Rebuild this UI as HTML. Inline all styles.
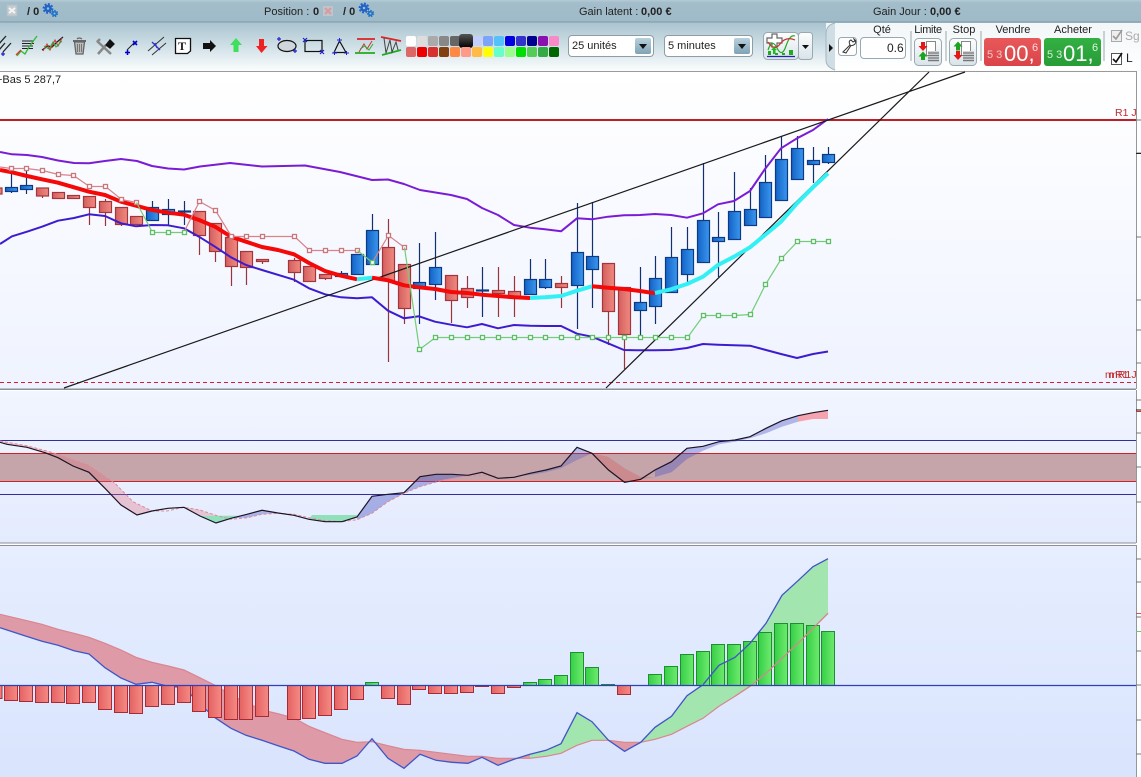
<!DOCTYPE html>
<html><head><meta charset="utf-8"><style>
html,body{margin:0;padding:0;width:1141px;height:777px;overflow:hidden;background:#fff;font-family:"Liberation Sans",sans-serif;font-size:11px;color:#222}
#a{position:absolute;left:0;top:0}
.t{position:absolute;white-space:nowrap;line-height:14px}
.c{transform:translateX(-50%)}
b{font-weight:bold}
.s{position:absolute;border:1px solid #8f9ea6;border-radius:4px;background:#fff;box-sizing:border-box;height:22px;top:35px}
.b{position:absolute;width:16px;height:16px;top:38px;border-radius:2px;background:linear-gradient(#b8d0dc,#7fa3b6)}
.b:after{content:"";position:absolute;left:4px;top:6px;border:4px solid transparent;border-top:5px solid #111;border-bottom:0}
.sw{position:absolute;width:10px;height:10px;border-radius:2px}
.o{position:absolute;box-sizing:border-box;border:1px solid #9aa8b0;border-radius:4px;background:#fff}
.pr{position:absolute;top:38px;height:28px;width:57px;border-radius:3px;color:#fff}
</style></head><body>
<svg id="a" width="1141" height="777" viewBox="0 0 1141 777">
<defs>
<linearGradient id="top" x1="0" y1="0" x2="0" y2="1"><stop offset="0" stop-color="#b4ccd7"/><stop offset=".12" stop-color="#a3bdca"/><stop offset="1" stop-color="#9fbac8"/></linearGradient>
<linearGradient id="tb" x1="0" y1="0" x2="0" y2="1"><stop offset="0" stop-color="#a9c3cf"/><stop offset=".5" stop-color="#d0e0e7"/><stop offset="1" stop-color="#fbfdfd"/></linearGradient>
<linearGradient id="bt" x1="0" y1="0" x2="0" y2="1"><stop offset="0" stop-color="#fdfefe"/><stop offset="1" stop-color="#d8e3e9"/></linearGradient>
<linearGradient id="m" x1="0" y1="0" x2="0" y2="1"><stop offset="0" stop-color="#fff"/><stop offset="1" stop-color="#eff3ff"/></linearGradient>
<linearGradient id="p2" x1="0" y1="0" x2="0" y2="1"><stop offset="0" stop-color="#f1f5ff"/><stop offset="1" stop-color="#e4ebfd"/></linearGradient>
<linearGradient id="p3" x1="0" y1="0" x2="0" y2="1"><stop offset="0" stop-color="#e6eeff"/><stop offset="1" stop-color="#d9e4fd"/></linearGradient>
<linearGradient id="bl"><stop offset="0" stop-color="#1362c6"/><stop offset="1" stop-color="#3b97ee"/></linearGradient>
<linearGradient id="rd"><stop offset="0" stop-color="#d45f5f"/><stop offset="1" stop-color="#f08a80"/></linearGradient>
<linearGradient id="hr"><stop offset="0" stop-color="#e46262"/><stop offset="1" stop-color="#f58a84"/></linearGradient>
<linearGradient id="hg"><stop offset="0" stop-color="#35cf45"/><stop offset="1" stop-color="#6fea6f"/></linearGradient>
</defs>
<!-- top bars -->
<rect x="0" y="0" width="1141" height="22" fill="url(#top)"/>
<rect x="0" y="22" width="1141" height="49" fill="url(#tb)"/>
<rect x="0" y="21.500" width="1141" height="1" fill="#7d9aa9"/>
<path d="M826 23H1141V70H838Q832 68 826 60Z" fill="#fff" fill-opacity=".85"/>
<path d="M835 23Q826 25 826 34V60Q826 67 835 70" fill="#cfdde4" stroke="#a5b6bf"/>
<rect x="0" y="71" width="1136" height="1" fill="#9a9a9a"/>
<!-- buttons -->
<rect x="763.500" y="32.500" width="35" height="27" rx="4" fill="url(#bt)" stroke="#9aa8b0"/>
<rect x="798.500" y="32.500" width="14" height="27" rx="3" fill="url(#bt)" stroke="#9aa8b0"/>
<rect x="838.500" y="37.500" width="18" height="18" rx="3" fill="#fff" stroke="#9aa8b0"/>
<rect x="914.500" y="38.500" width="27" height="27" rx="4" fill="url(#bt)" stroke="#9aa8b0"/>
<rect x="949.500" y="38.500" width="27" height="27" rx="4" fill="url(#bt)" stroke="#9aa8b0"/>
<!-- main chart -->
<rect x="0" y="72" width="1136" height="317" fill="url(#m)"/>
<rect x="1136" y="71" width="1" height="318" fill="#8f9aa0"/>
<path d="M1136 120H1141M1136 153H1141M1136 237H1141M1136 300H1141M1136 330H1141M1136 363H1141" stroke="#777" fill="none"/>
<path d="M1136 153.500H1141" stroke="#222"/>
<path d="M0 382.500H1136" stroke="#d02030" stroke-dasharray="4 3" fill="none"/>
<path d="M0 120H1136" stroke="#bf1e24" stroke-width="2" fill="none"/>
<rect x="0" y="388.500" width="1136" height="1.500" fill="#8a9296"/>
<!-- wicks -->
<path fill="none" stroke="#12306f" stroke-width="1.200" d="M11.500 171V193M26.500 171V194M152.500 201V220M168.500 199V225M184.500 201V225M341.500 271V276M372.500 214V264M419.500 243V324M435.500 232V300M482.500 267V317M530.500 259V294M545.500 259V289M577.500 203V329M592.500 202V308M640.500 267V340M655.500 256V324M671.500 227V292M687.500 227V282M703.500 163V262M718.500 212V277M734.500 172V239M750.500 188V225M765.500 155V217M781.500 136V200M797.500 136V179M813.500 147V183M828.500 147V164"/>
<path fill="none" stroke="#98343a" stroke-width="1.200" d="M42.500 196V198M58.500 198V199M73.500 198V199M89.500 207V225M105.500 199V226M121.500 224V226M199.500 235V255M215.500 251V262M231.500 266V286M246.500 267V285M262.500 261V264M294.500 258V282M309.500 281V282M325.500 278V280M388.500 219V362M404.500 308V324M451.500 300V323M467.500 276V308M498.500 267V317M514.500 276V317M561.500 276V308M608.500 311V345M624.500 334V369"/>
<!-- red bodies -->
<g fill="url(#rd)" stroke="#a2363c" stroke-width="1.200">
<rect x="-4" y="188" width="6" height="6"/><rect x="36.500" y="188" width="12" height="8"/><rect x="52.500" y="192.500" width="12" height="6"/><rect x="67.500" y="195.500" width="12" height="3"/><rect x="83.500" y="196.500" width="12" height="11"/><rect x="99.500" y="201.500" width="12" height="11"/><rect x="115.500" y="207.500" width="12" height="17"/><rect x="130.500" y="216.500" width="12" height="8"/><rect x="193.500" y="211.500" width="12" height="24"/><rect x="209.500" y="223.500" width="12" height="28"/><rect x="225.500" y="237.500" width="12" height="29"/><rect x="240.500" y="251.500" width="12" height="16"/><rect x="256.500" y="259.500" width="12" height="2"/><rect x="288.500" y="260.500" width="12" height="12"/><rect x="303.500" y="266.500" width="12" height="15"/><rect x="319.500" y="274.500" width="12" height="4"/><rect x="382.500" y="247.500" width="12" height="33"/><rect x="398.500" y="264.500" width="12" height="44"/><rect x="445.500" y="275.500" width="12" height="25"/><rect x="461.500" y="288.500" width="12" height="9"/><rect x="492.500" y="290.500" width="12" height="3"/><rect x="508.500" y="291.500" width="12" height="6"/><rect x="555.500" y="283.500" width="12" height="4"/><rect x="602.500" y="263.500" width="12" height="48"/><rect x="618.500" y="287.500" width="12" height="47"/>
</g>
<!-- blue bodies -->
<g fill="url(#bl)" stroke="#0d3a84" stroke-width="1.200">
<rect x="5.500" y="187.500" width="12" height="4"/><rect x="20.500" y="185.500" width="12" height="4"/><rect x="146.500" y="207.500" width="12" height="13"/><rect x="162.500" y="209.500" width="12" height="5"/><rect x="178.500" y="211" width="12" height="1"/><rect x="335.500" y="273.500" width="12" height="3"/><rect x="351.500" y="254.500" width="12" height="20"/><rect x="366.500" y="230.500" width="12" height="34"/><rect x="413.500" y="282.500" width="12" height="6"/><rect x="429.500" y="267.500" width="12" height="17"/><rect x="476.500" y="290" width="12" height="1"/><rect x="524.500" y="279.500" width="12" height="15"/><rect x="539.500" y="279.500" width="12" height="8"/><rect x="571.500" y="252.500" width="12" height="33"/><rect x="586.500" y="256.500" width="12" height="13"/><rect x="634.500" y="302.500" width="12" height="8"/><rect x="649.500" y="278.500" width="12" height="28"/><rect x="665.500" y="257.500" width="12" height="35"/><rect x="681.500" y="249.500" width="12" height="25"/><rect x="697.500" y="220.500" width="12" height="42"/><rect x="712.500" y="237.500" width="12" height="4"/><rect x="728.500" y="211.500" width="12" height="28"/><rect x="744.500" y="209.500" width="12" height="16"/><rect x="759.500" y="182.500" width="12" height="35"/><rect x="775.500" y="159.500" width="12" height="41"/><rect x="791.500" y="148.500" width="12" height="31"/><rect x="807.500" y="160.500" width="12" height="4"/><rect x="822.500" y="154.500" width="12" height="8"/>
</g>
<!-- bollinger -->
<polyline fill="none" stroke="#7a1cd6" stroke-width="2" stroke-linejoin="round" points="0,152 12,154.300 27,155 42,157 58,160.500 74,163 89,163.300 105,161 121,159 137,161 152,166 168,168.500 184,169.500 200,166.500 230,163 262,166.500 305,165.500 340,172 372,180 388,179.500 404,184 420,190 451,195 467,199 482,208 498,215 514,225 530,227.700 545,229.300 561,231.300 577,218.300 592,219.300 608,216.700 624,215.300 640,215 655,214 671,215 687,217.700 703,213.300 718,204.300 734,201 750,191 765,169 781,148.300 797,138.300 813,130 828,119"/>
<polyline fill="none" stroke="#3d1ccf" stroke-width="2" stroke-linejoin="round" points="0,244 12,236.300 27,231.700 42,226.700 58,220.700 74,218 89,214.300 105,216 121,223.300 136,226.300 152,225 168,225.300 184,228.300 199,236.700 215,246.700 231,257.300 246,265 262,270 294,279.700 309,288.300 325,294.300 341,297.300 357,298.300 372,297.300 388,310.700 404,318.300 419,316.300 435,321.700 451,324.700 467,327.300 482,324 498,328.300 514,325 530,325.700 545,326 561,326 577,333.700 592,336.700 608,343.300 624,350 640,350.300 655,350.300 671,350 687,348 703,344 718,344.700 734,345.300 750,345.700 766,350 781,354 797,358 813,354 828,351.500"/>
<!-- trend lines -->
<path d="M64 388L965 72M606 388L929 72" stroke="#1a1a1a" stroke-width="1.200" fill="none"/>
<!-- MA -->
<g fill="none" stroke-width="4" stroke-linejoin="round">
<polyline stroke="#f40808" points="0,170 12,172.300 27,176 42,179.300 58,182.700 74,187.300 89,191.700 105,195 121,201.700 136,205.700 152,210 168,212.700 184,214.700 199,220 215,226.700 231,236.700 246,241.700 262,247 278,250 294,254.300 309,263 325,271 341,275.700 357,279.300"/>
<polyline stroke="#33f0f5" points="357,279.300 372,277.700"/>
<polyline stroke="#f40808" points="372,277.700 388,280.300 404,285.300 419,287.300 435,289 451,292 467,293 482,294.700 498,296 514,297.300 530,298"/>
<polyline stroke="#33f0f5" points="530,298 545,297.300 561,296 577,290.700 592,286.300"/>
<polyline stroke="#f40808" points="592,286.300 608,287.700 624,289 640,291 655,293.300"/>
<polyline stroke="#33f0f5" points="655,293 671,289.300 687,284 703,276.700 718,265 734,256.700 750,247.300 765,235 781,221.700 797,203.300 813,187.300 828,173.300"/>
</g>
<!-- stops -->
<g fill="none" stroke="#d8848a" stroke-width="1.200">
<polyline points="0,167 11.500,168.500 26.500,168.500 42.500,170.500 58.500,174.500 73.500,175.500 89.500,186.500 105.500,186.500 121.500,199.500 136.500,202.500"/>
<polyline points="185,230 199.500,201.500 215.500,210.500 231.500,236.500 246.500,236.500 262.500,236.500 294.500,236.500 309.500,250.500 325.500,250.500 341.500,250.500 357.500,250.500"/>
<polyline points="372.500,262 388.500,235.500 404.500,247.500"/>
</g>
<g fill="#fff" stroke="#c8777c" stroke-width="1.300">
<rect x="9.500" y="166.500" width="4" height="4"/><rect x="24.500" y="166.500" width="4" height="4"/><rect x="40.500" y="168.500" width="4" height="4"/><rect x="56.500" y="172.500" width="4" height="4"/><rect x="71.500" y="173.500" width="4" height="4"/><rect x="87.500" y="184.500" width="4" height="4"/><rect x="103.500" y="184.500" width="4" height="4"/><rect x="119.500" y="197.500" width="4" height="4"/><rect x="134.500" y="200.500" width="4" height="4"/><rect x="197.500" y="199.500" width="4" height="4"/><rect x="213.500" y="208.500" width="4" height="4"/><rect x="229.500" y="234.500" width="4" height="4"/><rect x="244.500" y="234.500" width="4" height="4"/><rect x="260.500" y="234.500" width="4" height="4"/><rect x="292.500" y="234.500" width="4" height="4"/><rect x="307.500" y="248.500" width="4" height="4"/><rect x="323.500" y="248.500" width="4" height="4"/><rect x="339.500" y="248.500" width="4" height="4"/><rect x="355.500" y="248.500" width="4" height="4"/><rect x="386.500" y="233.500" width="4" height="4"/><rect x="402.500" y="245.500" width="4" height="4"/>
</g>
<g fill="none" stroke="#74cc78" stroke-width="1.200">
<polyline points="136.500,202.500 152.500,232.500 168.500,232.500 184.500,232.500"/>
<polyline points="357.500,250.500 372.500,262.500"/>
<polyline points="404.500,247.500 419.500,349.500 435.500,337.500 451.500,337.500 687.500,337.500 703.500,315.500 718.500,315.500 734.500,315.500 750.500,314.500 765.500,284.500 781.500,258.500 797.500,241.500 828.500,241.500"/>
</g>
<g fill="#fff" stroke="#5fbf66" stroke-width="1.300">
<rect x="150.500" y="230.500" width="4" height="4"/><rect x="166.500" y="230.500" width="4" height="4"/><rect x="182.500" y="230.500" width="4" height="4"/><rect x="370.500" y="260.500" width="4" height="4"/><rect x="417.500" y="347.500" width="4" height="4"/><rect x="433.500" y="335.500" width="4" height="4"/><rect x="449.500" y="335.500" width="4" height="4"/><rect x="465.500" y="335.500" width="4" height="4"/><rect x="480.500" y="335.500" width="4" height="4"/><rect x="496.500" y="335.500" width="4" height="4"/><rect x="512.500" y="335.500" width="4" height="4"/><rect x="528.500" y="335.500" width="4" height="4"/><rect x="543.500" y="335.500" width="4" height="4"/><rect x="559.500" y="335.500" width="4" height="4"/><rect x="575.500" y="335.500" width="4" height="4"/><rect x="590.500" y="335.500" width="4" height="4"/><rect x="606.500" y="335.500" width="4" height="4"/><rect x="622.500" y="335.500" width="4" height="4"/><rect x="638.500" y="335.500" width="4" height="4"/><rect x="653.500" y="335.500" width="4" height="4"/><rect x="669.500" y="335.500" width="4" height="4"/><rect x="685.500" y="335.500" width="4" height="4"/><rect x="701.500" y="313.500" width="4" height="4"/><rect x="716.500" y="313.500" width="4" height="4"/><rect x="732.500" y="313.500" width="4" height="4"/><rect x="748.500" y="312.500" width="4" height="4"/><rect x="763.500" y="282.500" width="4" height="4"/><rect x="779.500" y="256.500" width="4" height="4"/><rect x="795.500" y="239.500" width="4" height="4"/><rect x="811.500" y="239.500" width="4" height="4"/><rect x="826.500" y="239.500" width="4" height="4"/>
</g>
<!-- panel 2 -->
<rect x="0" y="391" width="1136" height="151.500" fill="url(#p2)"/>
<rect x="0" y="453.500" width="1136" height="28" fill="#c5a5aa"/>
<path d="M0 440.500H1136M0 494.500H1136" stroke="#2f2f9e" fill="none"/>
<path d="M0 453.500H1136M0 481.500H1136" stroke="#d01f26" fill="none"/>
<polygon fill="#e06a7a" fill-opacity=".32" points="0,441 28,446 53,452.700 88,465 115,483.300 133,501.700 152,511 137,515 121,505 105,488.300 89,472.300 73,466 58,457.700 45,452.700 27,447.300 7,444"/>
<polygon fill="#e06a7a" fill-opacity=".3" points="184,507.300 200,510 217,515.700 200,516"/>
<polygon fill="#8fe0bb" points="200,516 217,515.700 238,515.700 231,518.300 216,523"/>
<polygon fill="#8f9cdc" fill-opacity=".7" points="231,518.300 247,514.300 262,510.300 278,513 262,514.300 247,517.700"/>
<polygon fill="#8fe0bb" points="312,515 357,515 357,517 342,521.700 325,521.700 309,519.300"/>
<polygon fill="#4b55c4" fill-opacity=".42" points="357,517 372,496.300 388,494.300 404,492.700 420,476.700 436,474.300 452,474.300 468,475.300 443,480 420,486.700 404,493.300 388,501.700 372,513.300 357,519.700"/>
<polygon fill="#4b55c4" fill-opacity=".32" points="498,478 514,477.300 530,473.300 546,470 561,466 577,447.300 592,453.300 577,460 561,468.300 546,472.300 530,475"/>
<polygon fill="#d85a5a" fill-opacity=".35" points="592,453.300 608,456.700 624.600,468.300 640.700,477 655,477 640.700,479.300 624.600,482.300 608.500,470"/>
<polygon fill="#4b55c4" fill-opacity=".38" points="655,477 655,470 671.500,461.700 687,448.300 703,446.300 719,441.700 735,440 750,436.700 766,428.300 782,420.700 798,415.700 798,421.700 782,426.700 766,433.300 750,438.300 735,441.700 719,444.300 703,450.700 687,459 671.500,472.300"/>
<polygon fill="#f6a3b0" points="798,415.700 813,412.700 828,410.300 828,419 813,419 798,421.700"/>
<polyline fill="none" stroke="#e08a98" stroke-dasharray="3 2" points="0,441 28,446 53,452.700 88,465 115,483.300 133,501.700 152,511 167,511 184,507.300 200,510 217,515.700 231,519.300 247,517.700 262,514.300 278,513.300 294,514.300 309,517.700 325,520.700 342,521.700 357,519.700 372,513.300 388,501.700 404,493.300 420,486.700 443,480 468,475.700 498,475.700"/>
<polyline fill="none" stroke="#1c1426" stroke-width="1.200" points="0,442.300 7,444.300 27,447.300 45,452.700 58,457.700 73,466 89,472.300 105,488.300 121,505 137,515 152,511 168,508.300 184,507.300 200,516 216,523 231,518.300 247,514.300 262,510.300 278,513 294,515.300 309,519.300 325,521.700 342,521.700 357,517 372,496.300 388,494.300 404,492.700 420,476.700 436,474.300 452,474.300 468,475.300 482,472.300 498,478.300 514,477.300 530,473.300 546,470 561,466 577,447.300 592,453.300 608.500,470 624.600,482.300 640.700,479.300 655,470 671.500,461.700 687,448.300 703,446.300 719,441.700 735,440 750,436.700 766,428.300 782,420.700 798,415.700 813,412.700 828,410.300"/>
<rect x="1136" y="390" width="1" height="153" fill="#8f9aa0"/>
<path d="M1136 400H1141M1136 433H1141M1136 467H1141M1136 502H1141" stroke="#777" fill="none"/>
<path d="M1136 410H1141" stroke="#111"/><path d="M1136 411.500H1141" stroke="#c33"/>
<rect x="0" y="542.500" width="1136" height="1" fill="#8a9296"/>
<!-- panel 3 -->
<rect x="0" y="545" width="1136" height="232" fill="url(#p3)"/>
<rect x="0" y="545" width="1136" height="1" fill="#8a9296"/>
<rect x="1136" y="545" width="1" height="232" fill="#8f9aa0"/>
<path d="M1136 559H1141M1136 582H1141M1136 617H1141M1136 651H1141M1136 685H1141M1136 720H1141M1136 754H1141" stroke="#777" fill="none"/>
<path d="M1136 613.500H1141" stroke="#c55"/><path d="M1136 631.500H1141" stroke="#6c6"/>
<polygon fill="#df9aa7" points="0,614.300 27,620.700 42,624.300 58,629.300 74,633.300 89,637.300 105,643.300 121,650 136,657.300 152,662.300 168,666 184,670 199,677.300 215,685.300 231,695 246,702.300 262,710 278,713.700 294,718 309,726.300 325,732.700 342,739.300 357,742.300 372,741.700 388,745.700 404,749.300 420,750.300 436,752.300 452,754.300 468,756.300 482,756.300 498,758.300 514,758.300 530,758.300 530,754.300 514,759.300 498,765.300 482,757.300 468,763.300 452,762.300 436,760.300 420,754.300 404,768.300 388,758.300 372,738.700 357,756 342,763.300 325,763.300 309,759.300 294,751 278,745.700 262,740.300 246,735.300 231,728.300 215,717.700 199,703.300 184,687.300 168,686.300 152,682.300 136,684.300 121,678 105,667.700 89,654 74,650.700 58,645.300 42,641.300 17,633.300 0,627.700"/>
<polygon fill="#a2e5ae" points="530,758.300 546,756.300 561,753.300 577,745.300 592,740.300 608.500,740.300 592,721.700 577,712.700 561,743.700 546,750.300 530,754.300"/>
<polygon fill="#df9aa7" points="608.500,740.300 624.600,742.300 640.700,742.300 624.600,751.300"/>
<polygon fill="#a2e5ae" points="640.700,742.300 655,739.300 671.500,734.300 687,726.300 703,718.300 719,706.300 735,696.300 750,686.300 766,673.300 782,658.300 798,643.300 813,628.300 828,613.300 828,558.700 813,566.700 798,580.700 782,595.300 766,623.300 750,643.300 735,657.300 719,665.300 703,684.700 687,695.700 671.500,716.300 655,727.300"/>
<polyline fill="none" stroke="#d9868f" stroke-width="1.200" points="0,614.300 27,620.700 42,624.300 58,629.300 74,633.300 89,637.300 105,643.300 121,650 136,657.300 152,662.300 168,666 184,670 199,677.300 215,685.300 231,695 246,702.300 262,710 278,713.700 294,718 309,726.300 325,732.700 342,739.300 357,742.300 372,741.700 388,745.700 404,749.300 420,750.300 436,752.300 452,754.300 468,756.300 482,756.300 498,758.300 530,758.300 546,756.300 561,753.300 577,745.300 592,740.300 608.500,740.300 624.600,742.300 640.700,742.300 655,739.300 671.500,734.300 687,726.300 703,718.300 719,706.300 735,696.300 750,686.300 766,673.300 782,658.300 798,643.300 813,628.300 828,613.300"/>
<polyline fill="none" stroke="#3f55c8" stroke-width="1.300" points="0,627.700 17,633.300 42,641.300 58,645.300 74,650.700 89,654 105,667.700 121,678 136,684.300 152,682.300 168,686.300 184,687.300 199,703.300 215,717.700 231,728.300 246,735.300 262,740.300 278,745.700 294,751 309,759.300 325,763.300 342,763.300 357,756 372,738.700 388,758.300 404,768.300 420,754.300 436,760.300 452,762.300 468,763.300 482,757.300 498,765.300 514,759.300 530,754.300 546,750.300 561,743.700 577,712.700 592,721.700 608.500,740.300 624.600,751.300 640.700,742.300 655,727.300 671.500,716.300 687,695.700 703,684.700"/>
<g fill="url(#hr)" stroke="#a82a36" stroke-width="1">
<rect x="-2" y="685.500" width="4" height="13"/><rect x="4.500" y="685.500" width="13" height="15"/><rect x="19.500" y="685.500" width="13" height="16"/><rect x="35.500" y="685.500" width="13" height="17"/><rect x="51.500" y="685.500" width="13" height="17"/><rect x="66.500" y="685.500" width="13" height="18"/><rect x="82.500" y="685.500" width="13" height="17"/><rect x="98.500" y="685.500" width="13" height="24"/><rect x="114.500" y="685.500" width="13" height="27"/><rect x="129.500" y="685.500" width="13" height="28"/><rect x="145.500" y="685.500" width="13" height="21"/><rect x="161.500" y="685.500" width="13" height="19"/><rect x="177.500" y="685.500" width="13" height="17"/><rect x="192.500" y="685.500" width="13" height="26"/><rect x="208.500" y="685.500" width="13" height="32"/><rect x="224.500" y="685.500" width="13" height="34"/><rect x="239.500" y="685.500" width="13" height="34"/><rect x="255.500" y="685.500" width="13" height="31"/><rect x="287.500" y="685.500" width="13" height="34"/><rect x="302.500" y="685.500" width="13" height="33"/><rect x="318.500" y="685.500" width="13" height="30"/><rect x="334.500" y="685.500" width="13" height="24"/><rect x="350.500" y="685.500" width="13" height="14"/><rect x="381.500" y="685.500" width="13" height="13"/><rect x="397.500" y="685.500" width="13" height="19"/><rect x="412.500" y="685.500" width="13" height="4"/><rect x="428.500" y="685.500" width="13" height="8"/><rect x="444.500" y="685.500" width="13" height="8"/><rect x="460.500" y="685.500" width="13" height="7"/><rect x="475.500" y="685.500" width="13" height="1"/><rect x="491.500" y="685.500" width="13" height="8"/><rect x="507.500" y="685.500" width="13" height="2"/><rect x="617.500" y="685.500" width="13" height="9"/>
</g>
<g fill="url(#hg)" stroke="#1e8f30" stroke-width="1">
<rect x="365.500" y="682.500" width="13" height="3"/><rect x="523.500" y="682.500" width="13" height="3"/><rect x="538.500" y="679.500" width="13" height="6"/><rect x="554.500" y="675.500" width="13" height="10"/><rect x="570.500" y="652.500" width="13" height="33"/><rect x="585.500" y="667.500" width="13" height="18"/><rect x="601.500" y="684.500" width="13" height="1"/><rect x="648.500" y="674.500" width="13" height="11"/><rect x="664.500" y="666.500" width="13" height="19"/><rect x="680.500" y="654.500" width="13" height="31"/><rect x="696.500" y="651.500" width="13" height="34"/><rect x="711.500" y="644.500" width="13" height="41"/><rect x="727.500" y="644.500" width="13" height="41"/><rect x="743.500" y="641.500" width="13" height="44"/><rect x="758.500" y="632.500" width="13" height="53"/><rect x="774.500" y="623.500" width="13" height="62"/><rect x="790.500" y="623.500" width="13" height="62"/><rect x="806.500" y="625.500" width="13" height="60"/><rect x="821.500" y="631.500" width="13" height="54"/>
</g>
<polyline fill="none" stroke="#3f55c8" stroke-width="1.300" points="703,684.700 719,665.300 735,657.300 750,643.300 766,623.300 782,595.300 798,580.700 813,566.700 828,558.700"/>
<polyline fill="none" stroke="#d9868f" stroke-width="1.200" points="735,696.300 750,686.300 766,673.300 782,658.300 798,643.300 813,628.300 828,613.300"/>
<path d="M0 685.500H1136" stroke="#2e3fb8" stroke-width="1.300" fill="none"/>
<!-- toolbar icons -->
<g fill="none" stroke-width="1.300">
<path d="M-2 45L6 36M3 52L11 43M-1 50L5 43" stroke="#222"/><path d="M1 54H5M3 52V56" stroke="#22c"/>
<path d="M22 41H34M22 43.500H34M22 46H33M22 48.500H33" stroke="#222" stroke-width="1"/>
<path d="M17 56L21 51L25 54L29 47L37 36" stroke="#3b3"/><path d="M16 55L21 50" stroke="#d33"/>
<path d="M42 50L48 46L52 47L57 42L63 37" stroke="#222"/><path d="M43 51L47 44L50 50L55 40L58 46L62 38" stroke="#c33" stroke-width="1"/><path d="M44 46L49 49L53 42L56 47L62 41" stroke="#3a3" stroke-width="1"/>
<path d="M73 41H86" stroke="#666" stroke-width="2"/><path d="M77 39Q79 37 82 39" stroke="#666"/>
<path d="M74.500 42L76 54H83L84.500 42Z" fill="#bbb" stroke="#666"/><path d="M77.500 44V52M79.500 44V52M81.500 44V52" stroke="#777" stroke-width="1"/>
<path d="M97 41L111 54M100 39L97 42" stroke="#888" stroke-width="2.500"/><path d="M98 54L106 45" stroke="#888" stroke-width="2.500"/>
<path d="M106 45L110 40L114 44L110 48Z" fill="#111" stroke="#111"/>
<path d="M127 50L135 42" stroke="#222" stroke-width="1"/><path d="M125 52.500H130M127.500 50V55M133 41L137 45M137 41L133 45" stroke="#00c" stroke-width="1.600"/>
<path d="M148 51L164 37M152 55L166 43" stroke="#333" stroke-width="1"/><path d="M152 42L160 50M155 43L157 48" stroke="#33c" stroke-width="1.300"/>
<path d="M175.500 38.500H190.500V51L187.500 53.500H175.500Z" fill="#fff" stroke="#111"/>
</g>
<path d="M203 43H210V40L216 46L210 52V49H203Z" fill="#111"/>
<path d="M236 38L242 45H238.500V52H233.500V45H230Z" fill="#3ce05a"/>
<path d="M259 39H264V46H267.500L261.500 53L256 46H259Z" fill="#ee2222"/>
<g fill="none" stroke-width="1.200">
<rect x="279" y="40" width="16" height="11" fill="#cfd6dc" stroke="none"/>
<ellipse cx="287" cy="46" rx="9" ry="5.500" stroke="#111"/><path d="M277 39H281M279 37V41M293 51H297M295 49V53" stroke="#22c"/>
<rect x="305" y="40.500" width="17" height="11" stroke="#111"/><path d="M303 38L307 42M307 38L303 42M320 50L324 54M324 50L320 54" stroke="#22c"/>
<path d="M339.500 41L334 52.500H346Z" stroke="#111"/><path d="M337 40H342M339.500 38V43M332 53H337M334.500 51V55M344 53H349M346.500 51V55" stroke="#22c" stroke-width="1"/>
<path d="M357 39H375" stroke="#d22" stroke-width="1.800"/><path d="M355 53H375" stroke="#2a2" stroke-width="1.800"/><path d="M359 52L364 44L367 49L372 41" stroke="#c33" stroke-width="1"/><path d="M360 49L365 46L369 50L373 44" stroke="#3a3" stroke-width="1"/>
<path d="M381 37L401 41" stroke="#d22" stroke-width="1.800"/><path d="M382 55L401 50" stroke="#2a2" stroke-width="1.800"/><path d="M384 38L386 53L390 40L392 52L396 42L398 50" stroke="#444" stroke-width="1"/>
</g>
<!-- top row icons -->
<rect x="7" y="5" width="10" height="11" fill="#c3ccd0" stroke="#b4bec4"/><path d="M9 8L15 13M15 8L9 13" stroke="#f4f4f4" stroke-width="2"/>
<rect x="323" y="6" width="10" height="10" fill="#c0c5cc"/><path d="M325 8L331 14M331 8L325 14" stroke="#d89a9e" stroke-width="2"/>
<g fill="none">
<circle cx="48" cy="8.500" r="2.500" stroke="#1f62c8" stroke-width="2.500"/><circle cx="48" cy="8.500" r="4.500" stroke="#1f62c8" stroke-width="1.800" stroke-dasharray="2 1.500"/>
<circle cx="54.500" cy="13.500" r="1.800" stroke="#1f72c8" stroke-width="1.600"/><circle cx="54.500" cy="13.500" r="3" stroke="#1f72c8" stroke-width="1.300" stroke-dasharray="1.500 1.200"/>
<circle cx="364" cy="8" r="2.500" stroke="#1f62c8" stroke-width="2.500"/><circle cx="364" cy="8" r="4.500" stroke="#1f62c8" stroke-width="1.800" stroke-dasharray="2 1.500"/>
<circle cx="370.500" cy="13.500" r="1.800" stroke="#1f72c8" stroke-width="1.600"/><circle cx="370.500" cy="13.500" r="3" stroke="#1f72c8" stroke-width="1.300" stroke-dasharray="1.500 1.200"/>
</g>
<!-- wrench -->
<path d="M843 52L850 45Q848 41 851 40L853 42L855 41L854 39Q857 41 855 44Q853 46 851 45.500L846 53Z" fill="#fff" stroke="#333" stroke-width="1"/>
<!-- limit/stop -->
<g>
<rect x="926.500" y="41.500" width="9" height="14" fill="#fff" stroke="#888"/><rect x="928" y="51" width="11" height="11" fill="#cfd6da"/><path d="M928 53H939M928 55.500H939M928 58H939M928 60.500H939" stroke="#777" stroke-width="1.200"/>
<path d="M921 42H925V46H927.500L923 51L918.500 46H921Z" fill="#e41818"/><path d="M923 51.500L927.500 56.500H925V60H921V56.500H918.500Z" fill="#1ea31e"/>
<rect x="961.500" y="41.500" width="9" height="14" fill="#fff" stroke="#888"/><rect x="963" y="51" width="11" height="11" fill="#cfd6da"/><path d="M963 53H974M963 55.500H974M963 58H974M963 60.500H974" stroke="#777" stroke-width="1.200"/>
<path d="M958 41.500L962.500 46.500H960V50.500H956V46.500H953.500Z" fill="#1ea31e"/><path d="M956 51H960V55H962.500L958 60L953.500 55H956Z" fill="#e41818"/>
</g>
<path d="M911 31V61M946 31V61M981 31V61M1104 31V61" stroke="#9aa" fill="none"/>
<!-- triangle -->
<path d="M829 44L833 48L829 52Z" fill="#111"/>
<!-- chart type btn icon -->
<g fill="none" stroke-width="1.200"><path d="M767 38H772V34H777V38H782V43H777V47H772V43H767Z" fill="#fff" stroke="#666"/><path d="M768 50Q772 38 777 48T786 46T795 36" stroke="#2a2"/><path d="M768 42Q774 52 780 44T795 40" stroke="#c33"/><path d="M767 56.500H795" stroke="#22a"/></g>
<path d="M768 51H771V55H768ZM775 53H778V55H775ZM782 53H785V55H782ZM789 50H793V55H789Z" fill="#2a2"/>
<path d="M774 47L777 50H775.500V54H773V50H771Z" fill="#2b2"/>
<path d="M802 45H809L805.500 49Z" fill="#111"/>
<!-- checkboxes -->
<rect x="1111.500" y="30.500" width="10" height="11" fill="#eee" stroke="#aaa"/><path d="M1113 36L1116 39L1122 30" fill="none" stroke="#999" stroke-width="1.600"/>
<rect x="1111.500" y="53.500" width="10" height="11" fill="#fff" stroke="#555"/><path d="M1113 59L1116 62L1122 53" fill="none" stroke="#111" stroke-width="1.600"/>
</svg>
<!-- selects / buttons -->
<div class="s" style="left:568px;width:86px"></div><div class="b" style="left:635px"></div>
<div class="s" style="left:664px;width:89px"></div><div class="b" style="left:734px"></div>
<div class="o" style="left:860px;top:37px;width:46px;height:22px"></div>
<div class="pr" style="left:984px;background:linear-gradient(#e8595c,#d94448)"></div>
<div class="pr" style="left:1044px;background:linear-gradient(#34b043,#279c37)"></div>
<!-- swatches -->
<div class="sw" style="left:406px;top:36px;background:#fff"></div><div class="sw" style="left:417px;top:36px;background:#ddd"></div><div class="sw" style="left:428px;top:36px;background:#aaa"></div><div class="sw" style="left:439px;top:36px;background:#888"></div><div class="sw" style="left:450px;top:36px;background:#666"></div><div class="sw" style="left:472px;top:36px;background:#c4cffc"></div><div class="sw" style="left:483px;top:36px;background:#7ba4fa"></div><div class="sw" style="left:494px;top:36px;background:#55c0fa"></div><div class="sw" style="left:505px;top:36px;background:#0000e0"></div><div class="sw" style="left:516px;top:36px;background:#3333cc"></div><div class="sw" style="left:527px;top:36px;background:#000090"></div><div class="sw" style="left:538px;top:36px;background:#8a10b0"></div><div class="sw" style="left:549px;top:36px;background:#f88ac8"></div>
<div class="sw" style="left:459px;top:34px;width:14px;height:14px;background:linear-gradient(#555,#000);border-radius:3px"></div>
<div class="sw" style="left:406px;top:47px;background:#dd6666"></div><div class="sw" style="left:417px;top:47px;background:#ee0000"></div><div class="sw" style="left:428px;top:47px;background:#d83030"></div><div class="sw" style="left:439px;top:47px;background:#804010"></div><div class="sw" style="left:450px;top:47px;background:#ff8844"></div><div class="sw" style="left:461px;top:47px;background:#ff9988"></div><div class="sw" style="left:472px;top:47px;background:#ffbb44"></div><div class="sw" style="left:483px;top:47px;background:#ffff00"></div><div class="sw" style="left:494px;top:47px;background:#66ffcc"></div><div class="sw" style="left:505px;top:47px;background:#99ff88"></div><div class="sw" style="left:516px;top:47px;background:#00dd00"></div><div class="sw" style="left:527px;top:47px;background:#55cc55"></div><div class="sw" style="left:538px;top:47px;background:#33aa44"></div><div class="sw" style="left:549px;top:47px;background:#006600"></div>
<!-- text -->
<div class="t" style="left:27px;top:5px"><b>/ 0</b></div>
<div class="t" style="left:264px;top:5px">Position :</div>
<div class="t" style="left:313px;top:5px"><b>0</b></div>
<div class="t" style="left:343px;top:5px"><b>/ 0</b></div>
<div class="t" style="left:579px;top:5px">Gain latent :</div>
<div class="t" style="left:641px;top:5px"><b>0,00 €</b></div>
<div class="t" style="left:873px;top:5px">Gain Jour :</div>
<div class="t" style="left:930px;top:5px"><b>0,00 €</b></div>
<div class="t" style="left:572px;top:39px">25 unités</div>
<div class="t" style="left:668px;top:39px">5 minutes</div>
<div class="t" style="left:178px;top:39px;font-family:'Liberation Serif',serif;font-weight:bold;font-size:12px">T</div>
<div class="t c" style="left:882px;top:23px">Qté</div>
<div class="t c" style="left:928px;top:23px;letter-spacing:-.3px">Limite</div>
<div class="t c" style="left:964px;top:23px">Stop</div>
<div class="t c" style="left:1013px;top:23px">Vendre</div>
<div class="t c" style="left:1073px;top:23px">Acheter</div>
<div class="t" style="left:887px;top:41px;font-size:12px">0.6</div>
<div class="t" style="left:1125px;top:29px;color:#aaa;font-size:12px">Sg</div>
<div class="t" style="left:1126px;top:51px;font-size:12px">L</div>
<div class="t" style="left:987px;top:48px;color:#f4c8c8">5 3</div>
<div class="t" style="left:1004px;top:42px;color:#fff;font-size:22px;line-height:24px">00,</div>
<div class="t" style="left:1032px;top:41px;color:#f8dcdc">6</div>
<div class="t" style="left:1047px;top:48px;color:#d0f0d0">5 3</div>
<div class="t" style="left:1063px;top:42px;color:#fff;font-size:22px;line-height:24px">01,</div>
<div class="t" style="left:1092px;top:41px;color:#def8de">6</div>
<div class="t" style="left:-4px;top:73px">+Bas 5 287,7</div>
<div class="t" style="left:1115px;top:106px;color:#c02a2a;font-size:10.500px">R1 J</div>
<div class="t" style="left:1105px;top:368px;color:#c02a2a;font-size:10.500px">m</div>
<div class="t" style="left:1109px;top:368px;color:#c02a2a;font-size:10.500px">mR1</div>
<div class="t" style="left:1115px;top:368px;color:#c02a2a;font-size:10.500px">R1 J</div>
</body></html>
